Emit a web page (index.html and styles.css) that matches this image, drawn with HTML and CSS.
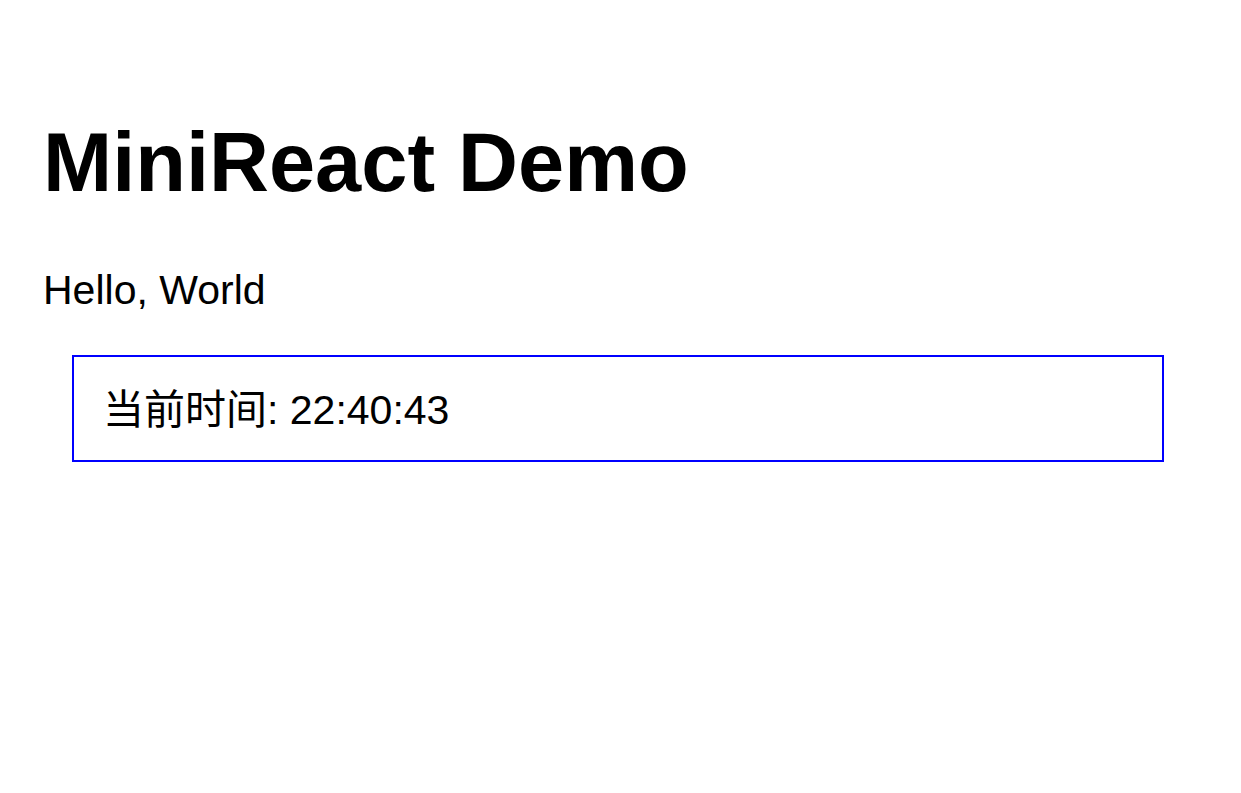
FILE: index.html
```html
<!DOCTYPE html>
<html lang="zh-CN">
<head>
  <meta charset="UTF-8">
  <title>MiniReact Demo</title>
  <link rel="stylesheet" href="styles.css">
</head>
<body>

  <div id="root">
    <h1>MiniReact Demo</h1>
    <p class="greeting">Hello, World</p>
    <div class="clock">当前时间: 22:40:43</div>
  </div>

</body>
</html>
```

FILE: styles.css
```css
* {
  box-sizing: border-box;
}

body {
  margin: 0;
  padding: 0;
  background: #ffffff;
  font-family: 'Liberation Sans', Arial, 'Noto Sans CJK SC', sans-serif;
  color: #000000;
}

#root {
  padding: 116px 40px 0 43px;
}

h1 {
  margin: 0;
  font-size: 83px;
  font-weight: bold;
  line-height: 94px;
}

.greeting {
  margin: 56px 0 0 0;
  font-size: 41px;
  line-height: 48px;
}

.clock {
  margin: 41px 37px 0 29px;
  padding: 29px 30px 26px 29px;
  border: 2px solid #0000ff;
  font-size: 41px;
  line-height: 48px;
}
```
